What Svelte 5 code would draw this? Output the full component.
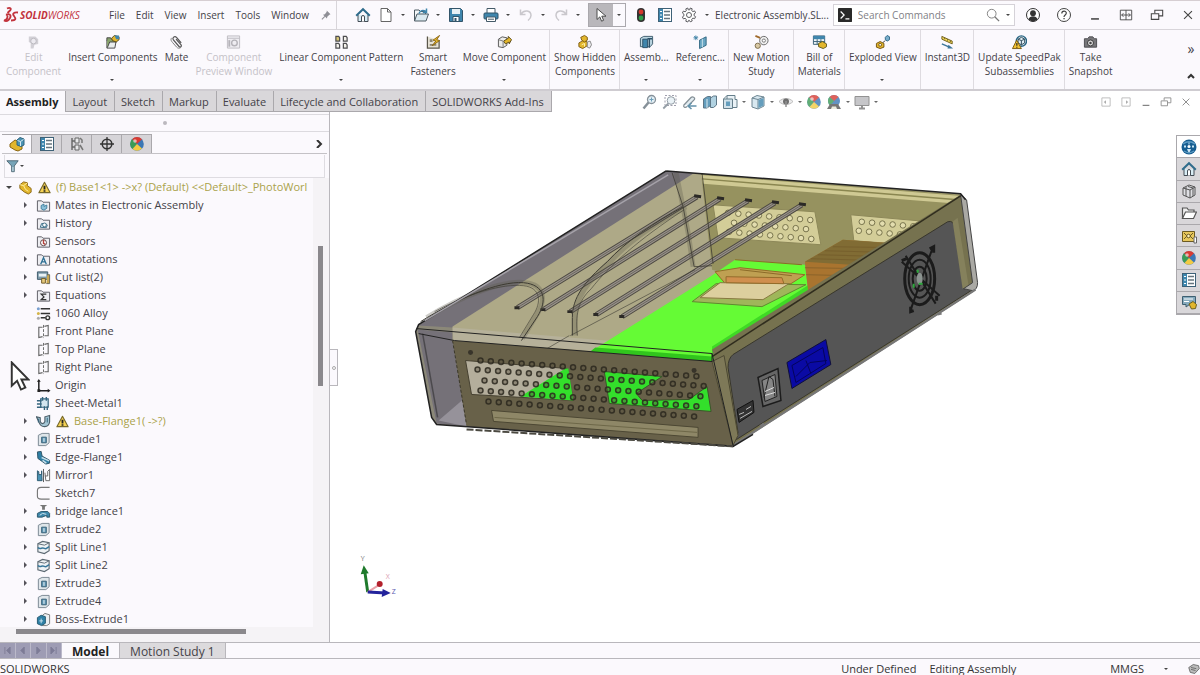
<script lang="ts">
  interface Command {
    lines: string[];
    icon: string;
    drop?: boolean;
    disabled?: boolean;
    sep?: boolean;
  }

  interface Node {
    label: string;
    icon: string;
    arrow?: boolean;
    warn?: boolean;
  }

  const menus = ["File", "Edit", "View", "Insert", "Tools", "Window"];

  const commands: Command[] = [
    { lines: ["Edit", "Component"], icon: "edit", disabled: true },
    { lines: ["Insert Components"], icon: "insert", drop: true },
    { lines: ["Mate"], icon: "clip" },
    { lines: ["Component", "Preview Window"], icon: "preview", disabled: true },
    { lines: ["Linear Component Pattern"], icon: "pattern", drop: true },
    { lines: ["Smart", "Fasteners"], icon: "fasteners" },
    { lines: ["Move Component"], icon: "move", drop: true },
    { lines: ["Show Hidden", "Components"], icon: "hidden", sep: true },
    { lines: ["Assemb..."], icon: "features", drop: true, sep: true },
    { lines: ["Referenc..."], icon: "reference", drop: true },
    { lines: ["New Motion", "Study"], icon: "motion", sep: true },
    { lines: ["Bill of", "Materials"], icon: "bom", sep: true },
    { lines: ["Exploded View"], icon: "explode", drop: true, sep: true },
    { lines: ["Instant3D"], icon: "instant", sep: true },
    { lines: ["Update SpeedPak", "Subassemblies"], icon: "speedpak", sep: true },
    { lines: ["Take", "Snapshot"], icon: "camera", sep: true },
  ];

  const tabs = [
    "Assembly",
    "Layout",
    "Sketch",
    "Markup",
    "Evaluate",
    "Lifecycle and Collaboration",
    "SOLIDWORKS Add-Ins",
  ];

  const quickTools = [
    { icon: "home", label: "Home" },
    { icon: "doc", label: "New", drop: true },
    { icon: "open", label: "Open", drop: true },
    { icon: "save", label: "Save", drop: true },
    { icon: "print", label: "Print", drop: true },
    { icon: "undo", label: "Undo", drop: true },
    { icon: "redo", label: "Redo", drop: true },
  ];

  const viewTools = [
    { icon: "zoomfit", label: "Zoom to Fit" },
    { icon: "zoomarea", label: "Zoom to Area" },
    { icon: "prevview", label: "Previous View" },
    { icon: "section", label: "Section View" },
    { icon: "orient", label: "View Orientation", drop: true },
    { icon: "style", label: "Display Style", drop: true },
    { icon: "eye", label: "Hide/Show Items", drop: true },
    { icon: "ball", label: "Edit Appearance" },
    { icon: "scene", label: "Apply Scene", drop: true },
    { icon: "monitor", label: "View Settings", drop: true },
  ];

  const panelTabs = [
    { icon: "assembly", label: "FeatureManager" },
    { icon: "list", label: "PropertyManager" },
    { icon: "config", label: "ConfigurationManager" },
    { icon: "target", label: "DimXpertManager" },
    { icon: "ball", label: "DisplayManager" },
  ];

  const taskTabs = [
    { icon: "globe", label: "3DEXPERIENCE" },
    { icon: "home", label: "Resources" },
    { icon: "library", label: "Design Library" },
    { icon: "folder", label: "File Explorer" },
    { icon: "palette", label: "View Palette" },
    { icon: "ball", label: "Appearances" },
    { icon: "list", label: "Custom Properties" },
    { icon: "forum", label: "Forum" },
  ];

  const nodes: Node[] = [
    { label: "Mates in Electronic Assembly", icon: "fmates", arrow: true },
    { label: "History", icon: "fhistory", arrow: true },
    { label: "Sensors", icon: "fsensor" },
    { label: "Annotations", icon: "fannot", arrow: true },
    { label: "Cut list(2)", icon: "cutlist", arrow: true },
    { label: "Equations", icon: "fequation", arrow: true },
    { label: "1060 Alloy", icon: "material" },
    { label: "Front Plane", icon: "plane" },
    { label: "Top Plane", icon: "plane" },
    { label: "Right Plane", icon: "plane" },
    { label: "Origin", icon: "origin" },
    { label: "Sheet-Metal1", icon: "sheet" },
    { label: "Base-Flange1( ->?)", icon: "flange", arrow: true, warn: true },
    { label: "Extrude1", icon: "extrude", arrow: true },
    { label: "Edge-Flange1", icon: "edge", arrow: true },
    { label: "Mirror1", icon: "mirror", arrow: true },
    { label: "Sketch7", icon: "sketch" },
    { label: "bridge lance1", icon: "lance", arrow: true },
    { label: "Extrude2", icon: "extrude", arrow: true },
    { label: "Split Line1", icon: "split", arrow: true },
    { label: "Split Line2", icon: "split", arrow: true },
    { label: "Extrude3", icon: "extrude", arrow: true },
    { label: "Extrude4", icon: "extrude", arrow: true },
    { label: "Boss-Extrude1", icon: "boss", arrow: true },
  ];

  const folder = `<path d="M1.500 14V3H6l1.500 1.500h7V14z" fill="#eeeef2" stroke="#5b5b63"/>`;
  const gold = "#e2b62c";
  const blue = "#3f86ad";

  const icons: Record<string, string> = {
    home: `<path d="M3 8v6.500h10V8" fill="#d9edf5" stroke="#444c55"/><path d="M1.200 8.800 8 2.200l6.800 6.600" fill="none" stroke="#2f6c8c" stroke-width="2"/><path d="M6.500 14.500V10a1.500 1.500 0 0 1 3 0v4.500" fill="#fff" stroke="#444c55"/>`,
    doc: `<path d="M3 1.500h6.500L13 5v9.500H3z" fill="#fff" stroke="#666"/><path d="M9.500 1.500V5H13" fill="none" stroke="#666"/>`,
    open: `<path d="M1.500 14V3H6l1.500 1.500h5V7" fill="#f3f6f8" stroke="#4d5a63"/><path d="M1.500 14 4 7h11.500l-2.500 7z" fill="#dbe9f0" stroke="#4d5a63"/><path d="M6 6.500c1-3 4-4 7-2M13.500 1.500v4H9.800" fill="none" stroke="${blue}" stroke-width="1.500"/>`,
    save: `<path d="M1.500 1.500h11l2 2v11h-13z" fill="${blue}" stroke="#33556a"/><path d="M4 2h8v5H4z" fill="#e8f1f5"/><path d="M5 9.500h6v5H5z" fill="#fff" stroke="#33556a"/><path d="M6.500 11h2v3h-2z" fill="#33556a"/>`,
    print: `<path d="M4 6V1.500h8V6" fill="#fff" stroke="#445a68"/><rect x="1" y="6" width="14" height="6" rx="1" fill="${blue}" stroke="#2e5369"/><path d="M3.500 10h9v4.500h-9z" fill="#fff" stroke="#445a68"/><path d="M5 12.200h6" stroke="#445a68"/>`,
    undo: `<path d="M2.500 2.500v5h5M3 7c3-4.500 10-4 10 1.500 0 2-1 3.500-3 5" fill="none" stroke="#c9c7cc" stroke-width="1.500"/>`,
    redo: `<path d="M13.500 2.500v5h-5M13 7c-3-4.500-10-4-10 1.500 0 2 1 3.500 3 5" fill="none" stroke="#c9c7cc" stroke-width="1.500"/>`,
    cursor: `<path d="M4 1.500v11l2.800-2.600 1.800 4.300 2-.9-1.800-4.100H13z" fill="#fff" stroke="#4a4a4a"/>`,
    light: `<rect x="4" y="1" width="8" height="14" rx="4" fill="#333"/><circle cx="8" cy="5" r="2.400" fill="#d4382c"/><circle cx="8" cy="11" r="2.400" fill="#2fa049"/>`,
    list: `<rect x="1.500" y="1.500" width="13" height="13" fill="#fff" stroke="#3e6177"/><path d="M2 2h4v12H2z" fill="${blue}"/><path d="M3 4.500h2M3 8h2M3 11.500h2" stroke="#fff"/><path d="M7 4.500h6M7 8h6M7 11.500h6" stroke="#66757e" stroke-width="1.300"/>`,
    gear: `<path d="m6.800 1 .4 1.800h1.600L9.200 1l2 .8-.5 1.800 1.200 1 1.700-.7 1 1.900-1.500 1.100v1.800l1.500 1-1 2-1.700-.6-1.200 1.100.5 1.800-2 .8-.9-1.500H7.700L6.800 15l-2-.8.5-1.800-1.200-1.100-1.700.6-1-2 1.500-1V7.100L1.400 6l1-1.900 1.700.7 1.200-1-.5-1.900z" fill="#fff" stroke="#5d5d62"/><circle cx="8" cy="8" r="2.500" fill="none" stroke="#5d5d62"/>`,
    pin: `<path d="m9 2 5 5-1.500.7-2.800 2.600-.4 2.500L4 7.500l2.500-.6L9 3.800z" fill="#8f8f96"/><path d="m6.500 9.700-4 4" stroke="#8f8f96" stroke-width="1.500"/>`,
    user: `<circle cx="8" cy="8" r="6.500" fill="#fff" stroke="#333"/><circle cx="8" cy="6.200" r="2.900" fill="#333"/><path d="M3.500 12.300c1-4 8-4 9 0-2.500 2.800-6.500 2.800-9 0" fill="#333"/>`,
    help: `<circle cx="8" cy="8" r="6.500" fill="#fff" stroke="#444"/><path d="M5.800 6.500c0-3 4.500-3 4.500-.4C10.300 8 8 8 8 10" fill="none" stroke="#444" stroke-width="1.200"/><path d="M7.400 11h1.300v1.300H7.400z" fill="#444"/>`,
    min: `<path d="M3.500 12.500h9" stroke="#333" stroke-width="1.600"/>`,
    span: `<path d="M1.500 2.500h13v11h-13zM8 2.500v11" fill="none" stroke="#444"/><path d="M3 8h10M5 6 3 8l2 2M11 6l2 2-2 2" fill="none" stroke="#444"/>`,
    restore: `<path d="M5.500 6V2.500h9V9H10" fill="none" stroke="#444" stroke-width="1.200"/><path d="M1.500 6.500h8.500V13H1.500z" fill="none" stroke="#444" stroke-width="1.200"/>`,
    close: `<path d="m3.500 3.500 9 9M12.500 3.500l-9 9" stroke="#444" stroke-width="1.300"/>`,
    dockl: `<path d="M2.500 2.500h11v11h-11z" fill="none" stroke="#777"/><path d="M8 5.500 5 8l3 2.500z" fill="#777"/>`,
    dockr: `<path d="M2.500 2.500h11v11h-11z" fill="none" stroke="#777"/><path d="M8 5.500 11 8l-3 2.500z" fill="#777"/>`,
    search: `<circle cx="6.500" cy="6.500" r="5" fill="none" stroke="#777"/><path d="m10 10 5 5" stroke="#777" stroke-width="1.500"/>`,
    prompt: `<rect width="16" height="16" rx="1" fill="#292929"/><path d="m3 4 4 4-4 4M8.500 12.500H13" fill="none" stroke="#fff" stroke-width="1.400"/>`,
    edit: `<path d="M3 2h7l3 3v5l-4 1-1 4H5V9L3 8z" fill="#d2d0d6"/><circle cx="8" cy="7" r="3" fill="#eceaf0" stroke="#bab8be"/>`,
    insert: `<path d="M2 6h10l-1.500 8.500H2z" fill="#e9ecec" stroke="#444"/><path d="M2 6.500V3.500h4l1 1.500h5v3H5L2.500 14" fill="#88a36d" stroke="#444"/><path d="m7 4 3-3 5 1.500v3L12 8 8 6.500z" fill="${gold}" stroke="#5a4a1c"/><path d="M10 1h5v4h-3z" fill="${blue}"/>`,
    clip: `<path d="m13 9-5-6c-2-2-5 .5-3.300 2.800l6 7c1.200 1.400 3.300-.3 2.200-1.800L7.500 5" fill="none" stroke="#555" stroke-width="1.300"/><path d="M3 3.500c-2 2 0 4 1 5.300l4 4.500c1.500 1.700 3 1.500 4.500.7" fill="none" stroke="#777"/>`,
    preview: `<path d="M1.500 1.500h13v13h-13zM1.500 4h13" fill="#efedf2" stroke="#bebcc2"/><circle cx="9" cy="9" r="3" fill="none" stroke="#b5b3b9" stroke-width="1.500"/><path d="M3.500 6v7" stroke="#b5b3b9" stroke-width="2"/>`,
    pattern: `<g fill="#f4f2ec" stroke="#4e4e50" stroke-width="1.300"><path d="M2 2h3l1 1.500V7H2z" fill="#d7c676"/><path d="M10 2h3l1 1.500V7h-4zM2 9.500h3L6 11v3.500H2zM10 9.500h3l1 1.500v3.500h-4z"/></g>`,
    fasteners: `<path d="M1.500 2v12.500h12.500V6" fill="#e6e2d5" stroke="#5a564a" stroke-width="1.300"/><path d="M4 5h3v3H4zM4 10h7v2H4z" fill="#8b8573"/><path d="m14.500 1-7 5 3 1-4 5 8-5.500-3-1z" fill="${gold}" stroke="#8d6612"/>`,
    move: `<path d="m1.500 5 4-2.500 5 1v8l-4 2.500-5-1z" fill="#ececea" stroke="#555"/><path d="m7 7 5-3V2l3.500 3.500L13 10V8L9 10z" fill="${gold}" stroke="#5a4a1c"/><path d="M1.500 5.500 6.500 7v7" fill="none" stroke="#777"/>`,
    hidden: `<path d="m2 9 5-3 4 2v4l-5 3-4-2z" fill="${gold}" stroke="#7d5b13"/><path d="m4 3 4-2 3 2v3L8 8 5 6z" fill="${gold}" stroke="#7d5b13"/><path d="m5 11 3-1.500V13" fill="none" stroke="#fff2b0"/><path d="m11 8 3-1 1.500 4-2 3.500-2.500-1z" fill="#e8e8ec" stroke="#888"/>`,
    features: `<path d="M1.500 4 5 2h9.500v8L12 13H1.500z" fill="#b9d4df" stroke="#3c5b6c"/><path d="M4 5h5v9H4z" fill="${blue}" stroke="#2c5068"/><path d="M11 4v10M9 4.500h5" stroke="#2c5068" stroke-width="1.500"/>`,
    reference: `<path d="M3 1v5M.5 3.500h5M1.200 1.700l3.600 3.600M4.800 1.700 1.200 5.300" stroke="#4586a9"/><path d="m7 6 7-3.500v9L7 15z" fill="#6aa7c4" stroke="#2f6681"/><path d="m10 4.500 0 9" stroke="#cbe1eb"/>`,
    motion: `<circle cx="10.500" cy="6.500" r="4.500" fill="#eee" stroke="#666"/><circle cx="10.500" cy="6.500" r="1.700" fill="#fff" stroke="#777"/><circle cx="4" cy="12" r="2.800" fill="#d9c9a5" stroke="#7a6a48"/><path d="m1.500 1.500 5 2" stroke="#a06b2c" stroke-width="2"/>`,
    bom: `<path d="M1.500 1.500h12v9h-12z" fill="#eef5f8" stroke="#396075"/><path d="M1.500 1.500h12V5h-12z" fill="${blue}"/><path d="M1.500 7.500h12M5.500 5v5.500M9.500 5v5.500" stroke="#396075"/><path d="m7 9.500 4-2 4.500 2.500v3L12 15l-5-2z" fill="${gold}" stroke="#5f5a1e"/>`,
    explode: `<path d="m1.500 9.500 4-2 4 2v4l-4 1.500-4-1.500z" fill="${gold}" stroke="#72520f"/><circle cx="5.500" cy="11" r="1.500" fill="#fff" stroke="#72520f"/><path d="m11 3 2-2 2.500 1.500v3L13 7l-2-1.500z" fill="#79aecb" stroke="#2c6888"/><path d="m8.500 8.500 2.500-2" stroke="#444"/>`,
    instant: `<path d="m2 2 11 5v3L2 5z" fill="#f0d657" stroke="#6e5e1c"/><path d="M5 3.500V5M8 5v1.500M11 6.500V8" stroke="#6e5e1c"/><path d="m2 10 8 3.500" stroke="#3b7599" stroke-width="1.500"/><path d="m9 11 5 3.800-6 .2z" fill="#3b7599"/>`,
    speedpak: `<circle cx="10" cy="7" r="5.500" fill="#e2eff5" stroke="#2a6683" stroke-width="1.500"/><path d="m6.500 5 3.500-2 3.500 2v4L10 11 6.500 9zM10 6.500V11M6.500 5 10 6.500 13.500 5" fill="none" stroke="#2a4655"/><path d="m5 6 5 9H.5z" fill="#f3c332" stroke="#7a5a10"/><path d="M5.200 9v3M5.200 13v1" stroke="#222" stroke-width="1.200"/>`,
    camera: `<path d="M1.500 4.500H5L6.500 2.500h4L12 4.500h2.500v9h-13z" fill="#77777a" stroke="#4c4c50"/><circle cx="8" cy="9" r="3.200" fill="#ddd" stroke="#333"/><circle cx="8" cy="9" r="1.300" fill="#444"/>`,
    zoomfit: `<circle cx="9.500" cy="5.500" r="4" fill="#dcebf2" stroke="#687680" stroke-width="1.300"/><path d="m6.500 8.500-5 6" stroke="#687680" stroke-width="2.500"/><path d="M9.500 3.500v4M7.500 5.500h4" stroke="#4b88a8"/>`,
    zoomarea: `<path d="M3 1.500h11v10H3z" fill="none" stroke="#889" stroke-dasharray="2 1.500"/><circle cx="9" cy="6.500" r="3.800" fill="#e5eff4" stroke="#7a8790"/><path d="m6.300 9.500-5 5" stroke="#7a8790" stroke-width="1.800"/>`,
    prevview: `<path d="M1.500 11.500 9 3.500c1.500-1.500 4.500 0 3.500 2l-5 5" fill="#dbe8ee" stroke="#65737c" stroke-width="1.200"/><path d="M1.500 11.500c0 2 2 2.500 3.500 1" fill="none" stroke="#65737c" stroke-width="1.200"/><path d="m9.500 9-3.500 3 3.500 3M6 12h8.500" fill="none" stroke="#3d7796" stroke-width="1.600"/>`,
    section: `<path d="m1.500 5 4-2.500h3v9L5 14H1.500z" fill="${blue}" stroke="#37566a"/><path d="m8.500 4 3-2h3v9l-3 2.500h-3z" fill="#9ec7da" stroke="#37566a"/><path d="M5 5v9" stroke="#d4e6ee"/>`,
    orient: `<path d="M5 1.500h8v4h2v8H5z" fill="#e6eff4" stroke="#41606f"/><path d="M1.500 5h9v9.500h-9z" fill="#c7dce6" stroke="#41606f"/><path d="M4 7.500h4V12H4z" fill="${blue}"/><path d="M1.500 5 5 1.500" stroke="#41606f"/>`,
    style: `<path d="m2 4 5-2.500L14 3v9l-6 3-6-2z" fill="#cfe3ed" stroke="#496878"/><path d="M2 4l6 1.500v9M8 5.500 14 3" fill="none" stroke="#496878"/><path d="M8.500 6 13.500 4v7.500l-5 2.500z" fill="${blue}"/>`,
    eye: `<path d="M1 7.500c4-4 10-4 14 0-4 4-10 4-14 0" fill="#e9e9ea" stroke="#aaa"/><circle cx="8" cy="7.500" r="3" fill="#4c4c4c"/><path d="M8 7v6" stroke="#777" stroke-width="1.500"/>`,
    ball: `<circle cx="8" cy="8" r="6.800" fill="#3b77b5"/><path d="M8 8 3 3.300A6.800 6.800 0 0 1 13 3.300z" fill="#d83a32"/><path d="M8 8 3 3.300A6.800 6.800 0 0 0 3.500 13z" fill="#3a9b55"/><path d="M8 8l-4.500 5a6.800 6.800 0 0 0 9.500-.5z" fill="#f2cb42"/><circle cx="6" cy="5" r="1.800" fill="#fff" opacity=".6"/>`,
    scene: `<circle cx="8" cy="7" r="6" fill="#3b77b5"/><path d="M8 7 3.500 3A6 6 0 0 1 12.500 3z" fill="#d83a32"/><path d="M8 7 3.500 3A6 6 0 0 0 4 11.500z" fill="#3a9b55"/><path d="M1 15l3-5h8l3 5z" fill="#555"/><path d="m5 15 1-2.500h4l1 2.500z" fill="#e6e6d5"/>`,
    monitor: `<path d="M1 2.500h14v9H1z" fill="#b9b9bc" stroke="#777"/><path d="M5 14.500h6M8 11.500v3" stroke="#777" stroke-width="2"/>`,
    assembly: `<path d="m1 8 5-4 3 1v3l4 1v4l-4 2-3-1-5-3z" fill="${gold}" stroke="#8a6512"/><path d="m8 4 3-2.500L15 3v6l-3 1.500L8 9z" fill="#4c94b4" stroke="#2e647f"/><path d="m8.500 4.500 3 1V10M11.500 5.500 14.500 3.500" fill="none" stroke="#d7e9f1"/>`,
    part: `<path d="m2 5 4-3 4 1v3l4 3v4l-3 2-4-2-5-4z" fill="${gold}" stroke="#8a6512"/><path d="m6 6 2 4 3 2M2 5l4 1 4-3" fill="none" stroke="#fff0a8"/>`,
    config: `<path d="M3 2v12M3 5h3M3 11h3" stroke="#666" stroke-width="1.400"/><path d="M6 2h4v5H6zM6 9h4v5H6z" fill="#e8e8ea" stroke="#666"/><path d="m11 2 2 2v3M11 9l3 5" fill="none" stroke="#777" stroke-width="1.500"/>`,
    target: `<circle cx="8" cy="8" r="4.800" fill="none" stroke="#333" stroke-width="1.500"/><path d="M8 1v14M1 8h14" stroke="#333" stroke-width="1.300"/>`,
    filter: `<path d="M1.500 2h13L10 8v6.500H7V8z" fill="#77a4b8" stroke="#48616e"/><path d="M8.500 9v5" stroke="#e9f3f7"/>`,
    warn: `<path d="m8 2.500 6 11H2z" fill="#f6d254" stroke="#77692a" stroke-width="1.200" stroke-linejoin="round"/><path d="M8 6v4M8 11v1.500" stroke="#222" stroke-width="2"/>`,
    globe: `<circle cx="8" cy="8" r="7.500" fill="#175e91"/><path d="M2 5c4-3 8-3 12 0M3 12c3 2 7 2 10 0" fill="none" stroke="#5e9cc4" stroke-width="1.500"/><path d="M8 3.500v2M6.500 10.500h3L8 13z" fill="#fff" stroke="#cbe7f5"/><path d="M3 7.500h2M11 7.500h2" stroke="#cbe7f5" stroke-width="2"/><circle cx="8" cy="7.500" r="1.500" fill="#fff"/>`,
    library: `<path d="m2 5 6-3 6 2v8l-5 3-7-3z" fill="#dedee2" stroke="#555"/><path d="m2 5 7 2v8M9 7l5-3M5 4v9M7 3.500l5 1.500v8" fill="none" stroke="#555"/>`,
    folder: `<path d="M1.500 13.500V3H6l1.500 2H13v2" fill="#eee" stroke="#555" stroke-width="1.200"/><path d="m1.500 13.500 3-6.500h11l-3 6.500z" fill="#fff" stroke="#555" stroke-width="1.200"/>`,
    palette: `<path d="M1.500 3.500h12v10h-12z" fill="#e7c75c" stroke="#6c5a22"/><path d="m3 5 3 3-3 3M12 5 9 8l3 3" fill="none" stroke="#6c5a22"/><circle cx="7.500" cy="8" r="1.800" fill="#fff3bd" stroke="#6c5a22"/><path d="M13 9h2.500v6H13z" fill="#fff" stroke="#666"/>`,
    forum: `<path d="M1.500 2.500h13v8h-6L5 13v-2.500H1.500z" fill="#86aabd" stroke="#3e5f71"/><path d="M3 5h9M3 7.500h5" stroke="#fff"/><path d="m8 10 4-2.500 3.500 3-1 4-4 .5z" fill="${gold}" stroke="#6d601b"/>`,
    fmates: folder + `<path d="m5.500 8 3-1.500V9l3-1.500v3.500l-3 2-3-1.500z" fill="#8cc1da" stroke="#3f7f9d"/>`,
    fhistory: folder + `<path d="m4.500 12 1.500-4h4l2 1.500-1 3z" fill="#d6e8f0" stroke="#3f6f88"/><circle cx="9" cy="9.500" r="2" fill="#fff" stroke="#3f6f88"/>`,
    fsensor: folder + `<circle cx="8" cy="9.300" r="3.200" fill="#fff" stroke="#5b4040"/><path d="M8 6v4l2 1" fill="none" stroke="#b3403a" stroke-width="1.500"/>`,
    fannot: folder + `<path d="m5 13 3-7 3 7M6 10.500h4" fill="none" stroke="#2d6f94" stroke-width="1.400"/>`,
    fequation: folder + `<path d="M11 6.500H5.500L8.500 9.500l-3 3H11" fill="none" stroke="#333" stroke-width="1.300"/>`,
    cutlist: `<path d="M1.500 2h11v8h-11z" fill="#7e9bab" stroke="#3d5969"/><path d="M3 4h8v3H3z" fill="#e8f1f5"/><path d="M6 9h4v5H6z" fill="#e3c87c" stroke="#6f5a25"/><path d="M12 5h2.500v9.500H11" fill="#c8a650" stroke="#665"/>`,
    material: `<circle cx="2.500" cy="3" r="1.600" fill="#7aa0d0"/><circle cx="2.500" cy="8" r="1.600" fill="#d4b54a"/><circle cx="2.500" cy="13" r="1.600" fill="#aaa"/><path d="M5 3h10M5 8h10M5 12.500h5" stroke="#333" stroke-width="1.500"/><circle cx="12.500" cy="12.500" r="2" fill="#fff" stroke="#333" stroke-width="1.500"/>`,
    plane: `<path d="M7 3.500H3v11l4-1M9 2.500l4-1v11H9" fill="none" stroke="#666" stroke-width="1.200"/><path d="M8 1v14" stroke="#666" stroke-dasharray="3 1.500"/>`,
    origin: `<path d="M3 3v10.500h10" fill="none" stroke="#222" stroke-width="1.600"/><path d="m3 1 2 3H1zM15.500 13.500l-3-2v4zM1.500 12h3v3h-3z" fill="#222"/>`,
    sheet: `<path d="M5 3h8v9H5z" fill="#d3e6ef" stroke="#35657e" stroke-width="1.300"/><path d="M1 5h5M1 8.500h5M1 12h5M7 1v4M11 1v4M9 11v4M12 11v4" stroke="#35657e" stroke-width="1.500"/>`,
    flange: `<path d="m.5 3 4 1v4c1 3 4 3 5 0V3l5-1.500v7c-1 6.500-9 6.500-11 1z" fill="#a5c7d6" stroke="#4c5f6a" stroke-width="1.200"/><path d="M12 4v5M2.500 5v4" stroke="#33627b"/>`,
    extrude: `<path d="m2.500 3.500 4-2h7.500v10l-3.500 3h-8z" fill="#dfe6ea" stroke="#778590"/><path d="M6 5.500h5v6H6z" fill="#5e96b4" stroke="#3a6177"/><path d="M8.500 6.500v4" stroke="#fff"/>`,
    edge: `<path d="m1.500 2 4-.5 1 5 8 4.500v3l-4 1-8.500-6z" fill="#2e7fa5" stroke="#2f5365"/><path d="m6 8 8 3.500M7 11l4 3" stroke="#c5dde8" stroke-width="1.500"/>`,
    mirror: `<path d="M1.500 3 3 4v3h3V3l.5 10.500h-5z" fill="#4b93b4" stroke="#2d5a70"/><path d="M8 1v14" stroke="#555"/><path d="m9.500 5 1 8.500h4v-12l-2 2v5h-3" fill="#fff" stroke="#666"/>`,
    sketch: `<path d="M14.500 1.500h-9q-4 0-4 3.500V11q0 3 4 3h9" fill="none" stroke="#777" stroke-width="1.200"/>`,
    lance: `<path d="M4 1h8L9.500 3v3h-3V3z" fill="#777"/><path d="m1.500 10 4-2h7l2 2v4h-3v-2l-5 2h-5z" fill="#3d87ab" stroke="#2b566c"/><path d="m4 12 3-2 4 1" fill="none" stroke="#d7e9f1"/>`,
    split: `<path d="m2 4 5-2.500 7 1.500v8.500l-5 3-7-2z" fill="#eef2f5" stroke="#5d6a73" stroke-width="1.200"/><path d="M2 8c3 3 4-1 7 1 2 1 3-1 5-2" fill="none" stroke="#37769a" stroke-width="1.600"/><path d="m2 4 7 1.500L14 3" fill="none" stroke="#5d6a73"/>`,
    boss: `<path d="M7 3.500 9.500 1.500 14.500 3v9.500l-3 2H7z" fill="#eceff1" stroke="#777"/><path d="m1.500 6 4-2.500 4.500 1.500v7l-4 2.500-4.500-2z" fill="#2f81a6" stroke="#235870"/><path d="M5.500 7v5M3.500 9.500h4" stroke="#cde4ee"/>`,
    tag: `<path d="m1 6 6-4 7 1.500 1 4L9 14l-6-1.500z" fill="#bbb" stroke="#555"/><path d="m4 6 7 1.500M4 8.500l6 1.500" stroke="#555"/>`,
  };

  // Perforated rows on the front plate.
  const frontHoles = [
    { x: 480, y: 361, n: 22 },
    { x: 477, y: 370, n: 23 },
    { x: 484, y: 381, n: 22 },
    { x: 480, y: 391, n: 22 },
    { x: 488, y: 402, n: 21 },
  ].flatMap((r) =>
    Array.from({ length: r.n }, (_, i) => ({ x: r.x + i * 10.3, y: r.y + i * 0.75 })),
  );

  const backHoles = [
    { x: 728, y: 213, n: 9 },
    { x: 734, y: 223, n: 8 },
    { x: 729, y: 232, n: 9 },
    { x: 862, y: 222, n: 6 },
    { x: 859, y: 231, n: 5 },
  ].flatMap((r) =>
    Array.from({ length: r.n }, (_, i) => ({ x: r.x + i * 10.3, y: r.y + i * 0.9 })),
  );

  const slots = [
    [517, 308, 697, 197],
    [543, 310, 720, 199],
    [570, 312, 748, 201],
    [596, 315, 775, 203],
    [622, 317, 802, 205],
  ];
</script>

{#snippet icon(name: string)}
  <svg class="icon" viewBox="0 0 16 16" aria-hidden="true">{@html icons[name]}</svg>
{/snippet}

<div class="app">
  <header class="titlebar">
    <div class="brand">
      <svg class="mark" viewBox="0 0 18 18" aria-hidden="true">
        <path
          d="M5 2.500c3-1.500 5 0 3 2L5.500 7M4 8.500c5-1.500 6 2 2.500 5.500-1.500 1.300-3.500 1-4.500.5 3 0 5-5 2-6M16 6.500c-4-.5-6 1-4 3.500s2.500 4.500-3 4.500"
          fill="none"
          stroke="#c2333c"
          stroke-width="1.800"
        />
      </svg>
      <span class="logo"><b>SOLID</b>WORKS</span>
    </div>
    <nav class="menus">
      {#each menus as menu}
        <button>{menu}</button>
      {/each}
      <button aria-label="Pin menu">{@render icon("pin")}</button>
    </nav>
    <div class="quick">
      {#each quickTools as tool}
        <button aria-label={tool.label}>{@render icon(tool.icon)}</button>
        {#if tool.drop}<i class="drop"></i>{/if}
      {/each}
      <div class="select-tool">
        <button aria-label="Select">{@render icon("cursor")}</button>
        <i class="drop"></i>
      </div>
      <div class="options">
        <button aria-label="Rebuild">{@render icon("light")}</button>
        <button aria-label="File properties">{@render icon("list")}</button>
        <button aria-label="Options">{@render icon("gear")}</button>
        <i class="drop"></i>
      </div>
    </div>
    <span class="doc-name">Electronic Assembly.SL...</span>
    <div class="search">
      {@render icon("prompt")}
      <input type="text" placeholder="Search Commands" aria-label="Search Commands" />
      {@render icon("search")}
      <i class="drop"></i>
    </div>
    <div class="window-buttons">
      <button aria-label="Account">{@render icon("user")}</button>
      <button aria-label="Help">{@render icon("help")}</button>
      <button class="small" aria-label="Minimize">{@render icon("min")}</button>
      <button class="small" aria-label="Span displays">{@render icon("span")}</button>
      <button class="small" aria-label="Restore">{@render icon("restore")}</button>
      <button class="small" aria-label="Close">{@render icon("close")}</button>
    </div>
  </header>

  <div class="ribbon">
    {#each commands as cmd}
      <button class="command" class:sep={cmd.sep} disabled={cmd.disabled}>
        {@render icon(cmd.icon)}
        {#each cmd.lines as line}
          <span>{line}</span>
        {/each}
        {#if cmd.drop}<i class="drop"></i>{/if}
      </button>
    {/each}
    <div class="ribbon-end">
      <button aria-label="More commands">»</button>
      <button aria-label="Collapse ribbon">
        <svg class="chevron" viewBox="0 0 8 8"><path d="m1 6 3-3 3 3" /></svg>
      </button>
    </div>
  </div>

  <div class="tab-row">
    <div class="tabs">
      {#each tabs as tab, i}
        <button class:active={i === 0}>{tab}</button>
      {/each}
    </div>
    <div class="view-tools">
      {#each viewTools as tool}
        <button aria-label={tool.label}>{@render icon(tool.icon)}</button>
        {#if tool.drop}<i class="drop"></i>{/if}
      {/each}
    </div>
    <div class="doc-buttons">
      <button aria-label="Dock left">{@render icon("dockl")}</button>
      <button aria-label="Dock right">{@render icon("dockr")}</button>
      <button aria-label="Minimize document">{@render icon("min")}</button>
      <button aria-label="Restore document">{@render icon("restore")}</button>
      <button aria-label="Close document">{@render icon("close")}</button>
    </div>
  </div>

  <main>
    <aside class="panel">
      <div class="splitter"></div>
      <div class="panel-tabs">
        {#each panelTabs as tab, i}
          <button class:active={i === 0} aria-label={tab.label}>{@render icon(tab.icon)}</button>
        {/each}
        <button class="expand" aria-label="Expand panel">
          <svg class="chevron" viewBox="0 0 8 8"><path d="m2 0 4 4-4 4" /></svg>
        </button>
      </div>
      <div class="filter">
        {@render icon("filter")}
        <i class="drop"></i>
        <input type="text" aria-label="Filter tree" />
      </div>
      <div class="tree-area">
        <ul class="tree">
          <li class="root warning">
            <i class="drop"></i>
            {@render icon("part")}
            {@render icon("warn")}
            <span>(f) Base1&lt;1&gt; -&gt;x? (Default) &lt;&lt;Default&gt;_PhotoWorl</span>
          </li>
          {#each nodes as node}
            <li class:warning={node.warn}>
              <i class="arrow" class:shown={node.arrow}></i>
              {@render icon(node.icon)}
              {#if node.warn}{@render icon("warn")}{/if}
              <span>{node.label}</span>
            </li>
          {/each}
        </ul>
        <div class="vscroll"><div class="thumb"></div></div>
      </div>
      <div class="hscroll"><div class="thumb"></div></div>
      <div class="handle"></div>
      <svg class="pointer" viewBox="0 0 20 32" aria-hidden="true">
        <path d="M1.500 1.500v24l5.500-5 4 9 4.500-2-4-8.500h7z" />
      </svg>
    </aside>

    <section class="viewport">
      <svg class="model" viewBox="330 112 846 531" role="img" aria-label="Enclosure model">
        <!-- glass shell -->
        <path
          d="M666 171 961 194 966 200 977 282 974 292 733 447 436 425 431 418 415 332 418 325z"
          fill="#8b8878"
        />
        <path d="M666 171 697 174 452 328 418 326z" fill="#757178" />
        <path d="M417 330 452 333 466 427 436 424z" fill="#757178" />
        <path d="M438 421 466 397v30z" fill="#96929a" />
        <!-- top cover -->
        <path d="M694 173 961 194 712 358 592 352 452 341 452 327z" fill="#aea987" />
        <path d="M701 174 961 195 809 298 712 270z" fill="#96925f" />
        <path d="m701 175 258 21v8L703 184z" fill="#cfc993" />
        <path d="m702 179 256 21" stroke="#8a8650" stroke-width="1.500" />
        <path d="m452 328 260 22v10L453 341z" fill="#b6b19a" />
        <g fill="#d3cd98" stroke="#8d8858">
          <path d="m713 205 102 7 6 33-103-7z" />
          <path d="m851 215 79 7-35 22-41-3z" />
        </g>
        {#each backHoles as h}
          <circle class="back-hole" cx={h.x} cy={h.y} r="2.800" />
        {/each}
        <!-- circuit board -->
        <path d="m735 260 70 5 4 32-97 63-120-9 118-74z" fill="#65fb35" />
        <path d="m712 347 97-62v13l-97 62z" fill="#3fda25" />
        <path d="m595 348 117 9v5l-122-10z" fill="#31c51d" />
        <path d="m805 262 38-22 55 4 12 5-101 49z" fill="#a9742f" />
        <path d="m805 262 38-22 55 4 6 4-38 18z" fill="#816c34" />
        <path
          d="m811 259 76 2M818 255l75 2M825 251l76 2M833 247l70 1M805 268l60 1M806 275l44 1"
          stroke="#6d5426"
          opacity=".5"
        />
        <path d="m692 302 24-18 90 1-44 22z" fill="#9fb65a" stroke="#5e8a2e" />
        <path d="m715 272 25-4 65 7-14 9-64 2z" fill="#bfa052" stroke="#946b2a" />
        <path d="m700 298 20-15 69 1-26 16z" fill="#dccf9e" stroke="#86773e" />
        <path d="m726 277 56 1 2 6-58-1z" fill="#d08f4e" stroke="#946b2a" />
        <path d="M740 270l52 6M735 260l67 5" fill="none" stroke="#8c6a28" />
        <!-- vents in the cover -->
        {#each slots as [x1, y1, x2, y2]}
          <path class="slot-edge" d="M{x1} {y1}L{x2} {y2}" />
          <path class="slot" d="M{x1} {y1}L{x2} {y2}" />
          <path class="slot-core" d="M{x1} {y1}L{x2} {y2}" />
          <path class="slot-cap" d="M{x1 - 3} {y1}h5M{x2 - 3} {y2 - 1}l7 1" />
        {/each}
        <g fill="none" stroke="#5a574a" stroke-width="5" opacity=".3">
          <path d="M426 318c35-22 78-38 99-35 20 2 20 18 12 31l-15 25" />
          <path d="M575 336v-18c0-20 12-36 35-56 18-20 48-40 76-55M676 173l12 60 5 34" />
        </g>
        <g fill="none" stroke="#3d3b32">
          <path d="M420 322c35-22 78-41 103-39 22 2 24 18 14 34l-16 24" />
          <path d="M434 312c35-19 68-28 89-26 18 2 18 17 10 29l-14 23" opacity=".6" />
          <path d="M572 336v-18c0-20 12-36 35-56 18-20 48-40 76-55" />
          <path d="M577 336c-2-20 0-34 14-47 17-22 48-50 93-79" opacity=".6" />
          <path d="m672 173 11 34 11 60 18-1M702 174l11 90" opacity=".8" />
          <path d="M570 336 695 270M545 350l24-14" opacity=".6" />
        </g>
        <!-- side plate -->
        <path d="M712 350 961 195 976 282 974 290 733 445z" fill="#76724f" />
        <path
          d="M733 355 948 222q6-2 7 6l9 61 9 1-238 151 3-8-10-65q0-9 5-13z"
          fill="#555"
          stroke="#38362c"
        />
        <path d="m953 222 5-4 11 68-6 3z" fill="#85815c" />
        <path d="m961 195 6 5 11 83q0 7-5 8l-9-2 9-6z" fill="#aaa9a4" stroke="#444" />
        <path d="m976 290-243 156M942 314l-4 1M764 424l-4 3" stroke="#777" stroke-width="2" />
        <path d="M712 357 961 196" stroke="#302d1e" stroke-width="1.500" />
        <!-- fan -->
        <g fill="none" stroke="#1b1b1b">
          <ellipse cx="920" cy="279" rx="15" ry="26" stroke-width="3" />
          <ellipse cx="920" cy="279" rx="11" ry="19" stroke-width="2" />
          <ellipse cx="920" cy="279" rx="7" ry="12" stroke-width="2" />
          <path d="m902 262 38 34M933 248l-22 62M906 256l30 48" stroke-width="2" />
          <path d="m902 261 5-2M930 249l4-2v6M937 296v5M911 307v5l3-1" stroke-width="3" />
        </g>
        <ellipse cx="920" cy="279" rx="3" ry="6" fill="#8c9490" />
        <path d="M919 284h4M918 270v3M914 284v4" stroke="#2da93c" stroke-width="2" />
        <!-- ports -->
        <path d="m787 363 39-23 5 25-39 24z" fill="#0a0aa4" stroke="#101038" />
        <path
          d="m792 366 31-18 3 16-30 19zM796 377l14-14 17-2M806 361l5 13"
          fill="none"
          stroke="#04045c"
        />
        <path d="m758 378 20-9 3 32-18 6z" fill="#666" stroke="#1c1c1c" stroke-width="1.500" />
        <path d="m762 381 13-6 2 22-12 5zM764 398l5-21 4 3 2 17" fill="#858585" stroke="#222" />
        <path d="m765 392 9-4M765 396l10-3" stroke="#ddd" />
        <path d="m737 410 16-9 1 12-15 10z" fill="#333" stroke="#111" />
        <path d="m739 415 5-2M746 410l5-3M740 419l12-7" stroke="#bbb" />
        <!-- front plate -->
        <path d="m452 341 260 21 21 85-267-20z" fill="#686149" />
        <path d="m465 361 102 8 6 32-102-6z" fill="#b4ae9c" stroke="#454030" />
        <path d="m565 369 3 0 5 32-53-4z" fill="#33df2b" />
        <path
          d="m604 372 58 5-26 17 6 7 47-1 18-13 4 25-102-8z"
          fill="#33df2b"
          stroke="#3b532a"
        />
        {#each frontHoles as h}
          <circle class="hole" cx={h.x} cy={h.y} r="2.500" />
        {/each}
        <circle cx="470" cy="353" r="2.500" fill="#38342a" />
        <circle cx="694" cy="371" r="2.500" fill="#38342a" />
        <path d="m491 411 207 17v10l-205-16z" fill="#8e8767" stroke="#4c4733" />
        <path d="m494 418 203 15" stroke="#6d6748" />
        <path d="m712 362 12-6 14 80-5 10z" fill="#7e7958" stroke="#4c4832" />
        <!-- edges -->
        <g fill="none" stroke="#222" stroke-width="1.500">
          <path d="M666 171 961 194 966 200M666 171 418 325l-3 7 16 86 5 7 297 22 20-12" />
          <path d="m416 329 296 25v8l-258-21-36-7M712 354l21 92" stroke-width="1" />
          <path d="m422 334 15 84" opacity=".5" />
        </g>
        <path d="M466 430 733 447" stroke="#4a4840" stroke-width="2" stroke-dasharray="7 2" />
        <path d="m424 321 244-146" stroke="#a5a2a9" stroke-width="1.500" />
        <path d="m452 341 14 84" stroke="#3b382b" stroke-dasharray="3 2" />
        <!-- triad -->
        <path d="m367 593-3-21" stroke="#1f7a2c" stroke-width="3" />
        <path d="m360 575 3-9 5 8z" fill="#1f7a2c" />
        <path d="m367 593 11-7" stroke="#e9a0a8" stroke-width="2" />
        <path d="m367 593 18 1" stroke="#23239c" stroke-width="3" />
        <path d="m382 590 8 4-9 4z" fill="#23239c" />
        <circle cx="379" cy="585" r="3" fill="#b3202c" />
        <text class="axis" x="360" y="562" fill="#777">Y</text>
        <text class="axis" x="385" y="580" fill="#d9a0b0">X</text>
        <text class="axis" x="391" y="595" fill="#5a5ab0">Z</text>
      </svg>
      <div class="task-pane">
        {#each taskTabs as tab, i}
          <button class:active={i === 0} aria-label={tab.label}>{@render icon(tab.icon)}</button>
        {/each}
      </div>
    </section>
  </main>

  <div class="sheet-tabs">
    <div class="steps">
      <button aria-label="First tab"><svg viewBox="0 0 8 8"><path d="M1 0v8M7 0 3 4l4 4z" /></svg></button>
      <button aria-label="Previous tab"><svg viewBox="0 0 8 8"><path d="M6 0 2 4l4 4z" /></svg></button>
      <button aria-label="Next tab"><svg viewBox="0 0 8 8"><path d="m2 0 4 4-4 4z" /></svg></button>
      <button aria-label="Last tab"><svg viewBox="0 0 8 8"><path d="M7 0v8M1 0l4 4-4 4z" /></svg></button>
    </div>
    <button class="sheet active">Model</button>
    <button class="sheet">Motion Study 1</button>
  </div>

  <footer class="status">
    <span class="product">SOLIDWORKS</span>
    <span>Under Defined</span>
    <span class="mode">Editing Assembly</span>
    <span>MMGS</span>
    <i class="drop"></i>
    {@render icon("tag")}
  </footer>
</div>

<style>
  :global(body) {
    margin: 0;
    background: #fff;
  }

  .app {
    display: flex;
    flex-direction: column;
    height: 100vh;
    overflow: hidden;
    font-family: "Open Sans", "Noto Sans", sans-serif;
    font-size: 11px;
    line-height: 14px;
    color: #444248;
    background: #fbf9fd;
  }

  button {
    display: flex;
    align-items: center;
    justify-content: center;
    margin: 0;
    padding: 0;
    border: 0;
    background: none;
    font: inherit;
    color: inherit;
    white-space: nowrap;
  }

  input {
    flex: 1;
    min-width: 0;
    padding: 0;
    border: 0;
    outline: 0;
    background: none;
    font: inherit;
    color: inherit;
  }

  input::placeholder {
    color: #817f86;
    opacity: 1;
  }

  .icon {
    display: block;
    flex: none;
    width: 16px;
    height: 16px;
  }

  .drop {
    flex: none;
    width: 0;
    border: 2px solid transparent;
    border-top-color: #444;
    border-bottom: 0;
  }

  .chevron {
    width: 8px;
    height: 8px;
    fill: none;
    stroke: #333;
    stroke-width: 2;
  }

  .titlebar {
    display: flex;
    align-items: center;
    box-sizing: border-box;
    height: 30px;
    flex: none;
    border-top: 1px solid #d6ced2;
    border-bottom: 1px solid #d8d5da;
    font-size: 10px;
  }

  .brand {
    display: flex;
    flex: none;
    align-items: center;
    width: 103px;
    padding-left: 2px;
    color: #c2333c;
  }

  .mark {
    width: 18px;
    height: 18px;
  }

  .logo {
    font-style: italic;
  }

  .menus {
    display: flex;
    align-items: center;
    align-self: stretch;
    gap: 11px;
    padding: 0 4px;
    border-right: 1px solid #d8d5da;
  }

  .menus .icon {
    width: 12px;
    height: 12px;
  }

  .quick {
    display: flex;
    align-items: center;
    gap: 7px;
    padding-left: 18px;
  }

  .quick > .drop {
    margin-right: 1px;
  }

  .select-tool {
    display: flex;
    align-items: center;
    gap: 4px;
    height: 22px;
    padding-right: 4px;
    border: 1px solid #aaa8ad;
  }

  .select-tool button {
    width: 24px;
    height: 22px;
    background: #b9b7bb;
  }

  .options {
    display: flex;
    align-items: center;
    gap: 8px;
  }

  .doc-name {
    padding: 0 4px 0 6px;
    white-space: nowrap;
  }

  .search {
    display: flex;
    align-items: center;
    flex: 1;
    min-width: 0;
    box-sizing: border-box;
    gap: 6px;
    height: 22px;
    padding: 0 4px;
    border: 1px solid #d5d2d8;
    background: #fff;
  }

  .search .icon {
    width: 14px;
    height: 14px;
  }

  .window-buttons {
    display: flex;
    flex: none;
    gap: 15px;
    padding: 0 4px 0 10px;
  }

  .small .icon {
    width: 14px;
    height: 14px;
    padding: 1px;
  }

  .ribbon {
    display: flex;
    flex: none;
    height: 59px;
    padding-left: 2px;
    border-bottom: 2px solid #cfccd1;
    font-size: 10px;
  }

  .command {
    flex-direction: column;
    justify-content: flex-start;
    position: relative;
    padding: 4px 3px 0 4px;
  }

  .command .icon {
    width: 15px;
    height: 16px;
  }

  .command.sep {
    border-left: 1px solid #dedbe0;
  }

  .command:disabled {
    color: #c5c2c8;
  }

  .command .drop {
    position: absolute;
    bottom: 8px;
    left: calc(50% - 2px);
  }

  .ribbon-end {
    display: flex;
    flex-direction: column;
    align-items: center;
    gap: 16px;
    margin-left: auto;
    padding: 12px 5px 0;
    font-size: 14px;
  }

  .tab-row {
    display: flex;
    flex: none;
    height: 21px;
    background: #fff;
  }

  .tabs {
    display: flex;
    background: #d9d7da;
    box-shadow: inset 0 -1px #aaa8ac;
  }

  .tabs button {
    padding: 0 7px 0 6px;
    border-right: 1px solid #aaa8ac;
  }

  .tabs .active,
  .sheet.active {
    background: #fbf9fd;
    font-weight: 700;
    color: #222;
  }

  .view-tools {
    display: flex;
    align-items: center;
    gap: 4px;
    padding-left: 90px;
    opacity: 0.8;
  }

  .doc-buttons {
    display: flex;
    align-items: center;
    gap: 8px;
    margin-left: auto;
    padding-right: 8px;
    opacity: 0.6;
  }

  .doc-buttons .icon {
    width: 12px;
    height: 12px;
  }

  main {
    display: flex;
    flex: 1;
    min-height: 0;
  }

  .panel {
    display: flex;
    flex: none;
    flex-direction: column;
    position: relative;
    box-sizing: border-box;
    width: 330px;
    border-right: 1px solid #b9b7bc;
  }

  .splitter {
    display: flex;
    align-items: center;
    justify-content: center;
    height: 16px;
    margin-top: 2px;
    border-top: 1px solid #dcdadf;
    border-bottom: 1px solid #dcdadf;
  }

  .splitter::before {
    content: "";
    width: 4px;
    height: 4px;
    border-radius: 50%;
    background: #bbb9be;
  }

  .panel-tabs {
    display: flex;
    height: 19px;
    margin: 2px 2px 0;
    border-bottom: 1px solid #c4c2c6;
  }

  .panel-tabs button {
    width: 30px;
    border-right: 1px solid #aaa8ac;
    border-top: 1px solid #aaa8ac;
    background: #d6d4d8;
  }

  .panel-tabs .active {
    background: #fbf9fd;
  }

  .panel-tabs .expand {
    width: 16px;
    margin-left: auto;
    border: 0;
    background: none;
  }

  .filter {
    display: flex;
    align-items: center;
    height: 22px;
    margin: 1px 4px 0;
    border: 1px solid #dedce1;
    border-top: 0;
  }

  .filter .icon {
    width: 15px;
    height: 14px;
  }

  .tree-area {
    display: flex;
    flex: 1;
    min-height: 0;
  }

  .tree {
    flex: 1;
    min-width: 0;
    margin: 0;
    padding: 0;
    overflow: hidden;
    list-style: none;
  }

  .tree li {
    display: flex;
    align-items: center;
    gap: 4px;
    height: 18px;
    padding-left: 24px;
    white-space: nowrap;
  }

  .tree .root {
    padding-left: 6px;
  }

  .root .drop {
    margin-right: 2px;
    border-width: 3px;
    border-bottom: 0;
  }

  .tree .icon {
    width: 15px;
    height: 15px;
  }

  .tree .warning {
    color: #aaa24a;
  }

  .arrow {
    width: 0;
    margin-right: 5px;
    border: 3px solid transparent;
    border-right: 0;
  }

  .arrow.shown {
    border-left-color: #55535a;
  }

  .vscroll {
    width: 16px;
    box-sizing: border-box;
    padding: 68px 6px 0 5px;
    background: #f5f3f6;
  }

  .vscroll .thumb {
    height: 140px;
    background: #8a888c;
  }

  .hscroll {
    height: 15px;
    padding: 2px 0 0 16px;
    background: #f5f3f6;
    box-sizing: border-box;
  }

  .hscroll .thumb {
    width: 230px;
    height: 5px;
    background: #8a888c;
  }

  .handle {
    display: flex;
    align-items: center;
    justify-content: center;
    position: absolute;
    top: 237px;
    right: -9px;
    width: 7px;
    height: 35px;
    border: 1px solid #b9b7bc;
    border-left: 0;
    background: #fbf9fd;
  }

  .handle::before {
    content: "";
    width: 2px;
    height: 2px;
    border: 1px solid #aaa;
    border-radius: 50%;
  }

  .pointer {
    position: absolute;
    top: 249px;
    left: 10px;
    width: 20px;
    height: 31px;
    fill: #fff;
    stroke: #333;
    stroke-width: 2;
  }

  .viewport {
    display: flex;
    align-items: flex-start;
    flex: 1;
    min-width: 0;
    background: #fff;
  }

  .model {
    flex: 1;
    min-width: 0;
    height: 100%;
  }

  .hole {
    fill: #575140;
    fill-opacity: 0.4;
    stroke: #2b281e;
    stroke-width: 1.5;
    stroke-opacity: 0.85;
  }

  .back-hole {
    fill: #e3ddaf;
    stroke: #77734c;
  }

  .slot-edge {
    stroke: #4d4942;
    stroke-width: 5;
  }

  .slot {
    stroke: #99938a;
    stroke-width: 3;
  }

  .slot-core {
    stroke: #6a655f;
  }

  .slot-cap {
    stroke: #2c2a26;
    stroke-width: 3;
  }

  .axis {
    font-size: 7px;
  }

  .task-pane {
    display: flex;
    flex: none;
    flex-direction: column;
    box-sizing: border-box;
    width: 24px;
    height: 180px;
    margin-top: 23px;
    border: 1px solid #aaa8ac;
    border-right: 0;
  }

  .task-pane button {
    flex: 1;
    border-bottom: 1px solid #aaa8ac;
    background: #d9d7da;
  }

  .task-pane .active {
    background: #fff;
  }

  .sheet-tabs {
    display: flex;
    flex: none;
    box-sizing: border-box;
    height: 17px;
    border-top: 1px solid #b9b7bc;
    border-bottom: 1px solid #b9b7bc;
  }

  .steps {
    display: flex;
    width: 62px;
    background: #9e9cb4;
  }

  .steps button {
    flex: 1;
    border-right: 1px solid #bbb9ca;
  }

  .steps svg {
    width: 7px;
    height: 7px;
    fill: #7d7b96;
    stroke: #7d7b96;
  }

  .sheet {
    padding: 2px 10px 0;
    border-right: 1px solid #b9b7bc;
    background: #dcdadd;
    font-size: 12px;
  }

  .status {
    display: flex;
    align-items: center;
    flex: none;
    height: 13px;
    padding-top: 3px;
    color: #333;
  }

  .product {
    flex: 1;
  }

  .mode {
    padding: 0 94px 0 13px;
  }

  .status .drop {
    margin: 0 20px;
  }

  .status .icon {
    width: 12px;
    height: 12px;
  }
</style>
